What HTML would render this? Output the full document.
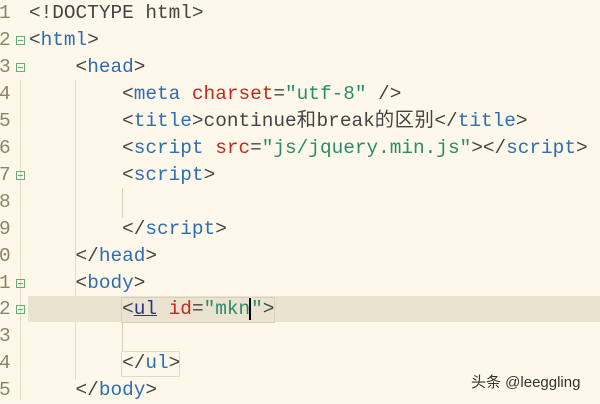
<!DOCTYPE html>
<html><head><meta charset="utf-8"><style>
body{margin:0;width:600px;height:400px;overflow:hidden;background:#fdf8e9;position:relative;font-family:"Liberation Mono","Noto Sans CJK SC",monospace;font-size:19.4px}
.l{position:absolute;left:0;height:27px;line-height:27px;white-space:pre;width:600px}
.n{position:absolute;left:-1px;color:#8c8468}
.c{position:absolute;left:29px;color:#444}
.t{color:#2d6db3}.a{color:#c8261e}.s{color:#2a8c6c}
.f{position:absolute;left:16px;width:7px;height:7px;border:1px solid #6aaa7a;top:9px}
.f:after{content:"";position:absolute;left:1px;top:3px;width:5px;height:1px;background:#6aaa7a}
.g{position:absolute;width:1px;background:#e2dcc6}
.cj{letter-spacing:0.5px}
</style></head><body>
<div class="g" style="left:20px;top:80px;height:320px"></div>
<div class="g" style="left:75px;top:80px;height:300px"></div>
<div class="g" style="left:122px;top:188px;height:30px;background:#d9d2bb"></div>
<div class="g" style="left:122px;top:322px;height:30px;background:#d9d2bb"></div>
<div style="position:absolute;left:28px;top:296px;width:572px;height:26px;background:#e9e3d0"></div>
<div style="position:absolute;left:121px;top:297px;width:152px;height:24px;border:1px solid #d8d0b8"></div>
<div style="position:absolute;left:121px;top:351px;width:57px;height:24px;border:1px solid #e2dbc5"></div>
<div class="l" style="top:0"><span class="n">1</span><span class="c">&lt;!DOCTYPE html&gt;</span></div>
<div class="l" style="top:27px"><span class="n">2</span><span class="f"></span><span class="c">&lt;<span class="t">html</span>&gt;</span></div>
<div class="l" style="top:54px"><span class="n">3</span><span class="f"></span><span class="c">    &lt;<span class="t">head</span>&gt;</span></div>
<div class="l" style="top:81px"><span class="n">4</span><span class="c">        &lt;<span class="t">meta</span> <span class="a">charset</span>=<span class="s">"utf-8"</span> /&gt;</span></div>
<div class="l" style="top:108px"><span class="n">5</span><span class="c">        &lt;<span class="t">title</span>&gt;continue<span class="cj">和</span>break<span class="cj">的区别</span>&lt;/<span class="t">title</span>&gt;</span></div>
<div class="l" style="top:135px"><span class="n">6</span><span class="c">        &lt;<span class="t">script</span> <span class="a">src</span>=<span class="s">"js/jquery.min.js"</span>&gt;&lt;/<span class="t">script</span>&gt;</span></div>
<div class="l" style="top:162px"><span class="n">7</span><span class="f"></span><span class="c">        &lt;<span class="t">script</span>&gt;</span></div>
<div class="l" style="top:189px"><span class="n">8</span></div>
<div class="l" style="top:216px"><span class="n">9</span><span class="c">        &lt;/<span class="t">script</span>&gt;</span></div>
<div class="l" style="top:243px"><span class="n">0</span><span class="c">    &lt;/<span class="t">head</span>&gt;</span></div>
<div class="l" style="top:270px"><span class="n">1</span><span class="f"></span><span class="c">    &lt;<span class="t">body</span>&gt;</span></div>
<div class="l" style="top:296px"><span class="n">2</span><span class="f"></span><span class="c">        &lt;<span class="t" style="text-decoration:underline;color:#2a3590">ul</span> <span class="a">id</span>=<span class="s">"mkn</span><span style="border-left:2px solid #000;margin-left:-1px"></span><span class="s">"</span>&gt;</span></div>
<div class="l" style="top:323px"><span class="n">3</span></div>
<div class="l" style="top:350px"><span class="n">4</span><span class="c">        &lt;/<span class="t">ul</span>&gt;</span></div>
<div class="l" style="top:377px"><span class="n">5</span><span class="c">    &lt;/<span class="t">body</span>&gt;</span></div>
<div style="position:absolute;left:471px;top:371px;font-family:'Liberation Sans','Noto Sans CJK SC',sans-serif;font-size:15px;color:#333">头条 @leeggling</div>
</body></html>
